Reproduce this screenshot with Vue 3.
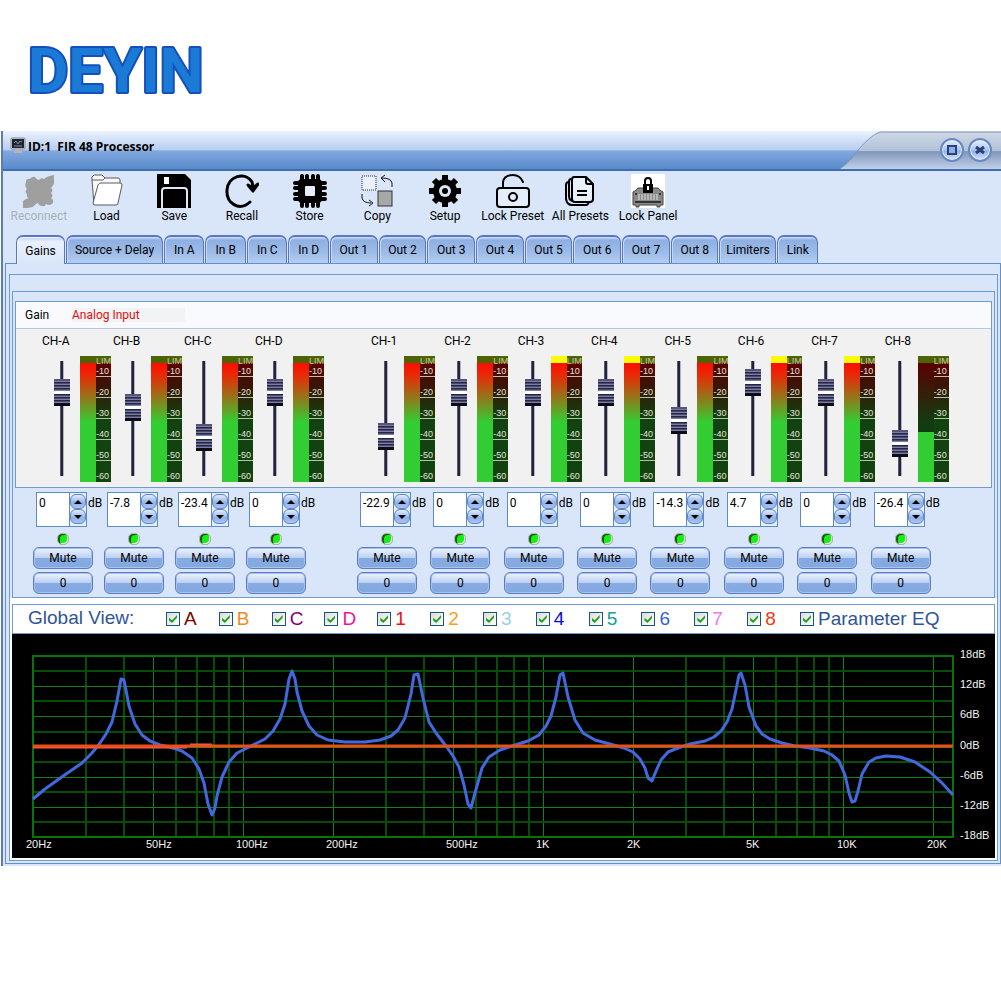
<script setup>
import { ref } from 'vue'

const tools = [
  { id: 'reconnect', label: 'Reconnect', disabled: true },
  { id: 'load', label: 'Load' },
  { id: 'save', label: 'Save' },
  { id: 'recall', label: 'Recall' },
  { id: 'store', label: 'Store' },
  { id: 'copy', label: 'Copy' },
  { id: 'setup', label: 'Setup' },
  { id: 'lockPreset', label: 'Lock Preset' },
  { id: 'allPresets', label: 'All Presets' },
  { id: 'lockPanel', label: 'Lock Panel' }
]

const tabs = [
  { label: 'Gains', size: 470 },
  { label: 'Source + Delay', size: 950 },
  ...['A', 'B', 'C', 'D'].map((n) => ({ label: 'In ' + n, size: 385 })),
  ...[1, 2, 3, 4, 5, 6, 7, 8].map((n) => ({ label: 'Out ' + n, size: 457 })),
  { label: 'Limiters', size: 550 },
  { label: 'Link', size: 385 }
]
const activeTab = ref('Gains')

const channels = ref([
  { id: 'A', gain: 0, input: true },
  { id: 'B', gain: -7.8, input: true },
  { id: 'C', gain: -23.4, input: true },
  { id: 'D', gain: 0, input: true },
  { id: '1', gain: -22.9 },
  { id: '2', gain: 0 },
  { id: '3', gain: 0, limit: true },
  { id: '4', gain: 0, limit: true },
  { id: '5', gain: -14.3 },
  { id: '6', gain: 4.7, limit: true },
  { id: '7', gain: 0, limit: true },
  { id: '8', gain: -26.4, level: 42 }
])
function nudge(ch, step) {
  ch.gain = Math.round((ch.gain + step) * 10) / 10
}

const scale = [-10, -20, -30, -40, -50, -60]

const views = ref([
  { id: 'A', color: '#800000' },
  { id: 'B', color: '#f08c1e' },
  { id: 'C', color: '#800080' },
  { id: 'D', color: '#ee1493' },
  { id: '1', color: '#ee1010' },
  { id: '2', color: '#f5a21c' },
  { id: '3', color: '#9ccfe0' },
  { id: '4', color: '#0808d8' },
  { id: '5', color: '#12a098' },
  { id: '6', color: '#3a5fd0' },
  { id: '7', color: '#e87ae8' },
  { id: '8', color: '#f03c10' }
].map((v) => ({ ...v, on: true })))
const parameterEq = ref(true)

const xOf = (f) => 243 + 300 * Math.log10(f / 100)
const freqs = [30, 40, 50, 60, 70, 80, 90]
for (const d of [100, 1000]) for (let n = 1; n < 10; n++) freqs.push(n * d)
freqs.push(10000, 20000)
const vLines = freqs.map((f) => ({ x: Math.round(xOf(f)), major: /^[125]/.test(String(f)) }))
const hLines = Array.from({ length: 11 }, (_, i) => ({ y: Math.round(656 + (i + 1) * 15.1), major: i % 2 === 1 }))
const xLabels = [
  [26, '20Hz'], [146, '50Hz'], [236, '100Hz'], [326, '200Hz'], [446, '500Hz'],
  [536, '1K'], [627, '2K'], [746, '5K'], [837, '10K'], [927, '20K']
]
const yLabels = ['18dB', '12dB', '6dB', '0dB', '-6dB', '-12dB', '-18dB']

const curve = '33,799 45,789 66,774 82,763 92,753 100,743 106,734 112,722 117,701 121,679 124,680 129,706 135,724 142,735 150,741 160,745 170,747 182,751 192,758 199,769 204,783 208,804 212,815 215,808 217,796 222,777 229,762 237,753 247,748 257,743 265,739 273,731 280,719 285,704 289,679 292,671 295,679 297,692 302,711 309,726 317,735 328,740 345,742 365,742 380,740 391,736 398,730 405,718 411,694 414,675 418,674 423,698 429,722 436,733 446,746 453,756 459,767 464,785 468,804 471,808 475,793 482,768 489,757 500,750 515,745 528,741 539,735 546,726 551,716 556,697 560,675 563,673 568,697 575,720 583,733 595,740 610,744 624,748 633,752 640,759 645,768 648,778 652,781 656,771 661,760 668,752 678,748 690,744 705,741 714,737 721,731 727,722 732,709 736,690 739,675 741,673 745,685 749,707 756,726 762,734 770,739 782,743 795,746 810,748 824,751 832,755 839,761 845,775 849,793 852,802 855,801 858,791 862,774 869,762 876,758 886,756 900,757 915,762 930,772 942,783 953,795'
</script>

<template>
  <header class="brand">
    <svg class="logo" width="200" height="70" role="img" aria-label="DEYIN">
      <text x="-1" y="56">DEYIN</text>
    </svg>
  </header>

  <main class="window">
    <div class="titlebar">
      <svg class="app-icon" width="16" height="17" viewBox="0 0 16 17">
        <rect x="1" y="1" width="14" height="11" rx="1" fill="#d8d8d8" stroke="#8a8a8a" />
        <rect x="2" y="2" width="12" height="9" fill="#1c2733" />
        <path d="M4 6l2-2 2 3 2-3 2 1M4 9h8" stroke="#8195a8" fill="none" />
        <path d="M6 12h4v2h2v2H4v-2h2z" fill="#b4b4b4" />
      </svg>
      <h1>ID:1&nbsp; FIR 48 Processor</h1>
      <div class="caption">
        <svg class="caption-bg" viewBox="0 0 161 38" preserveAspectRatio="none">
          <defs>
            <linearGradient id="cap" x1="0" y1="0" x2="0" y2="1">
              <stop offset="0" stop-color="#cfd8e6" />
              <stop offset=".5" stop-color="#b2c2d9" />
              <stop offset=".53" stop-color="#8097bb" />
              <stop offset="1" stop-color="#c2d0e8" />
            </linearGradient>
          </defs>
          <path d="M0 38C14 30 26 6 41 1H161V38Z" fill="url(#cap)" />
          <path d="M0 37C13 29 25 6 40 1H161" fill="none" stroke="#7c93b5" />
        </svg>
        <button class="round" aria-label="Maximize">
          <svg width="12" height="12" viewBox="0 0 12 12"><rect x="2" y="2" width="8" height="8" fill="#8fb0e4" stroke="#2b4272" stroke-width="2" /></svg>
        </button>
        <button class="round" aria-label="Close">
          <svg width="12" height="12" viewBox="0 0 12 12"><path d="M2 3l8 6M10 3L2 9" stroke="#2b4272" stroke-width="3" /></svg>
        </button>
      </div>
    </div>

    <nav class="toolbar">
      <button v-for="t in tools" :key="t.id" class="tool" :disabled="t.disabled">
        <svg width="34" height="34" viewBox="0 0 34 34" fill="none">
          <path v-if="t.id === 'reconnect'" fill="#9f9f9f" d="M4 8q0-4 4-3 2-3 5-2 2 3 4 3 2-3 5-1 3-3 10-4v9l-3 4q3 2 0 5 3 3 0 5 4 3 1 6-3 2-6 0-1 3-4 2-3 0-4-3-3 1-4 3-2 2-11 2v-7q2-2 6-3-3-1-2-4-3-2 0-5-3-3-1-7z" />
          <g v-else-if="t.id === 'load'" fill="#fff" stroke="#5c5c5c">
            <path d="M4 31L2 6V3l2-2h8l3 3h13q2 0 2 2v5" fill="#f8f8f8" />
            <path d="M2 6h11l2-2" />
            <path d="M5 31q-2 0-2-2L8 11q1-2 3-2h19q2 0 2 2l-4 18q0 2-2 2z" />
          </g>
          <g v-else-if="t.id === 'save'">
            <path d="M0 0H28L34 6V34H0Z" fill="#000" />
            <rect x="7" y="3" width="5" height="7" fill="#fff" />
            <path d="M5 34V17q0-3 3-3H27q3 0 3 3V34" stroke="#dce8f8" stroke-width="2" />
          </g>
          <g v-else-if="t.id === 'recall'" stroke="#000">
            <path d="M25 28C14 38 1 29 2 16 3 2 20-3 27 8q1 3 1 7" stroke-width="3" stroke-linecap="round" />
            <path d="M23 11l5 6 5-7-5 4z" fill="#000" stroke-width="3" stroke-linejoin="round" />
          </g>
          <g v-else-if="t.id === 'store'">
            <path d="M9 2v30M14 2v30M20 2v30M25 2v30M2 9h30M2 14h30M2 20h30M2 25h30" stroke="#000" stroke-width="4" stroke-linecap="round" />
            <rect x="5" y="5" width="24" height="24" rx="4" fill="#000" />
            <rect x="12" y="12" width="10" height="10" rx="1" fill="#e4edfa" />
          </g>
          <g v-else-if="t.id === 'copy'">
            <rect x="2" y="2" width="14" height="14" fill="#eaf1fc" stroke="#222" stroke-dasharray="1 1" />
            <rect x="18" y="17" width="14" height="15" fill="#a8a8a8" stroke="#333" />
            <path d="M32 13V9Q31 4 22 4M25 1l-4 3 4 4M2 20v4q1 5 9 5M9 26l4 3-4 3" stroke="#111" />
          </g>
          <g v-else-if="t.id === 'setup'">
            <path d="M17 1v32M1 17h32M6 6l22 22M6 28L28 6" stroke="#000" stroke-width="6" />
            <circle cx="17" cy="17" r="12" fill="#000" />
            <circle cx="17" cy="17" r="6" fill="#dce8f8" />
            <circle cx="17" cy="17" r="3" fill="#000" />
          </g>
          <g v-else-if="t.id === 'lockPreset'" stroke="#000" stroke-width="2">
            <rect x="1" y="14" width="32" height="19" rx="3" fill="#e4edfa" />
            <path d="M7 14V8Q8 1 17 1q7 0 10 7" stroke-linecap="round" />
            <circle cx="17" cy="23" r="4" />
          </g>
          <g v-else-if="t.id === 'allPresets'" stroke="#000" stroke-width="2" stroke-linejoin="round">
            <path d="M6 8q-3 0-3 3v14q1 6 6 6h14q2 0 3-3" />
            <path d="M8 5q-2 0-2 3v14q0 5 5 5" />
            <path d="M11 3h12l7 7v15q0 3-3 3H12q-3 0-3-3V6q0-3 2-3z" fill="#e8f0fb" />
            <path d="M23 3v5q0 2 2 2h5M14 17h10M14 21h10" />
          </g>
          <g v-else>
            <rect width="34" height="34" fill="#fff" />
            <path d="M4 17l3-3h20l3 3 2 1v13h-3v2h-3v-2H8v2H5v-2H2V18z" fill="#8b8b8b" stroke="#444" />
            <path d="M8 20v6M11 20v6M14 20v6M17 20v6M20 20v6M23 20v6M26 20v6" stroke="#e4e4e4" />
            <path d="M4 28h26M4 20h2M28 20h2" stroke="#333" stroke-width="2" />
            <rect x="12" y="10" width="10" height="9" fill="#000" />
            <path d="M14 11V7q0-3 3-3t3 3v4" stroke="#000" stroke-width="2" />
            <path d="M17 12v4" stroke="#fff" stroke-width="2" />
          </g>
        </svg>
        <span>{{ t.label }}</span>
      </button>
    </nav>

    <div class="tabs" role="tablist">
      <button
        v-for="t in tabs"
        :key="t.label"
        class="tab"
        :class="{ active: t.label === activeTab }"
        :style="{ flexGrow: t.size }"
        role="tab"
        :aria-selected="t.label === activeTab"
        @click="activeTab = t.label"
      >{{ t.label }}</button>
    </div>

    <section class="page">
      <div class="frame">
        <div class="mixer">
          <div class="levels">
            <div class="levels-head">
              <span class="gain-label">Gain</span>
              <span class="source">Analog Input</span>
            </div>
            <div class="strips">
              <div v-for="ch in channels" :key="ch.id" class="strip" :class="{ 'first-out': ch.id === '1' }">
                <label :for="'fader' + ch.id" class="name" :class="{ input: ch.input }">CH-{{ ch.id }}</label>
                <div class="strip-body">
                  <input :id="'fader' + ch.id" v-model.number="ch.gain" class="fader" type="range" min="-36" max="9" step="0.1" />
                  <div class="meter">
                    <div class="bar" :class="{ limit: ch.limit }">
                      <div class="lim-led"></div>
                      <div class="fill-area">
                        <div class="fill" :class="{ low: ch.level }" :style="{ height: (ch.level || 100) + '%' }"></div>
                      </div>
                    </div>
                    <div class="scale">
                      <span class="lim">LIM</span>
                      <span v-for="s in scale" :key="s" class="mark">{{ s }}</span>
                    </div>
                  </div>
                </div>
              </div>
            </div>
          </div>

          <div class="controls">
            <div v-for="ch in channels" :key="ch.id" class="control" :class="{ 'first-out': ch.id === '1' }">
              <div class="gain-row">
                <div class="spin">
                  <input v-model.number="ch.gain" type="text" :aria-label="'Gain CH-' + ch.id" />
                  <div class="spin-buttons">
                    <button class="up" :aria-label="'Raise CH-' + ch.id" @click="nudge(ch, 0.1)"></button>
                    <button class="down" :aria-label="'Lower CH-' + ch.id" @click="nudge(ch, -0.1)"></button>
                  </div>
                </div>
                <span>dB</span>
              </div>
              <span class="led"></span>
              <button class="pill">Mute</button>
              <button class="pill zero">0</button>
            </div>
          </div>
        </div>

        <div class="lower">
          <div class="global">
            <h2>Global View:</h2>
            <div class="checks">
              <label v-for="v in views" :key="v.id" :style="{ color: v.color }">
                <input v-model="v.on" type="checkbox" />{{ v.id }}
              </label>
            </div>
            <label class="param"><input v-model="parameterEq" type="checkbox" />Parameter EQ</label>
          </div>

          <svg class="chart" viewBox="12 634 983 224">
            <rect x="12" y="634" width="983" height="224" fill="#000" />
            <line v-for="l in vLines" :key="'v' + l.x" :x1="l.x" :x2="l.x" y1="656" y2="836" :class="l.major ? 'major' : 'minor'" />
            <line v-for="l in hLines" :key="'h' + l.y" :y1="l.y" :y2="l.y" x1="33" x2="953" :class="l.major ? 'major' : 'minor'" />
            <rect x="33" y="656" width="920" height="181" fill="none" stroke="#087308" stroke-width="2" />
            <polyline :points="curve" fill="none" stroke="#4169dc" stroke-width="3" stroke-linejoin="round" />
            <path d="M33 747H187M190 745H212" stroke="#f4604c" stroke-width="3" />
            <path d="M33 746H953" stroke="#ee4c18" stroke-width="3" />
            <text v-for="l in xLabels" :key="l[1]" :x="l[0]" y="848">{{ l[1] }}</text>
            <text v-for="(l, i) in yLabels" :key="l" x="960" :y="658 + Math.round(i * 30.2)">{{ l }}</text>
          </svg>
        </div>
      </div>
    </section>
  </main>
</template>

<style>
body {
  background: #fff;
}
</style>

<style scoped>
* {
  box-sizing: border-box;
}
button {
  font: inherit;
  color: inherit;
  padding: 0;
  margin: 0;
}
.brand {
  height: 131px;
  padding: 36px 0 0 29px;
}
.logo {
  display: block;
  overflow: visible;
}
.logo text {
  font: 700 62px Roboto, sans-serif;
  fill: #1a7ad6;
  stroke: #1450bc;
  stroke-width: 4px;
  stroke-linejoin: round;
  paint-order: stroke;
}
.window {
  margin-left: 1px;
  border-left: 2px solid #5f78c4;
  background: #d9e6f9;
  padding-bottom: 2px;
  font: 12px/14px Roboto, "Liberation Sans", sans-serif;
  color: #000;
}
.titlebar {
  display: flex;
  height: 40px;
  padding-left: 7px;
  border-bottom: 2px solid #3f6db6;
  background: linear-gradient(#eaf2fe, #b8cdef 50%, #83a9df 52%, #588aca);
}
.app-icon {
  margin-top: 6px;
}
.titlebar h1 {
  flex: 1;
  margin: 8px 0 0 2px;
  font: 700 12px/16px "Open Sans", "Noto Sans", sans-serif;
  white-space: nowrap;
}
.caption {
  position: relative;
  display: flex;
  gap: 4px;
  width: 161px;
  padding: 7px 9px 0 0;
  justify-content: flex-end;
}
.caption-bg {
  position: absolute;
  inset: 0;
  width: 100%;
  height: 100%;
}
.round {
  position: relative;
  display: flex;
  align-items: center;
  justify-content: center;
  width: 24px;
  height: 24px;
  border: 2px solid #6689c2;
  border-radius: 50%;
  background: linear-gradient(#e6effd, #a9c4f0 50%, #8cb0ea 55%, #d4e4fc);
  box-shadow: inset 0 0 0 1px #e8f0fc;
}
.toolbar {
  display: grid;
  grid-template-columns: repeat(10, 1fr);
  width: 677px;
  max-width: 100%;
  height: 64px;
  padding-top: 3px;
  margin-left: 2px;
}
.tool {
  display: flex;
  flex-direction: column;
  align-items: center;
  gap: 1px;
  border: 0;
  background: none;
  white-space: nowrap;
}
.tool:disabled {
  color: #a9b0ba;
}
.tabs {
  display: flex;
  width: 803px;
  max-width: 100%;
  height: 28px;
  margin-left: 13px;
}
.tab {
  flex: 1 1 0;
  height: 28px;
  margin-right: 1px;
  border: 1px solid #5b76c6;
  border-top-width: 2px;
  border-bottom: 0;
  border-radius: 7px 7px 0 0;
  background: linear-gradient(#d3e1f7, #8eafe0 3px, #9dbce8 60%, #b5cdf1);
  box-shadow: inset 1px 1px 0 #c6d8f4;
  white-space: nowrap;
}
.tab.active {
  position: relative;
  height: 29px;
  background: linear-gradient(#bcd0f0, #eaf1fc 5px, #d9e6f9);
  box-shadow: inset 1px 1px 0 #f0f5fe;
}
.page {
  margin-left: 2px;
  padding: 10px 2px 2px 3px;
  border: 1px solid #6290cc;
}
.frame {
  padding: 16px 2px 0;
  border: 1px solid #6f9bd0;
}
.mixer {
  padding: 9px 2px 0;
  border: 1px solid #6f9bd0;
}
.levels {
  border: 1px solid #6f9bd0;
  background: #f1f1f1;
}
.levels-head {
  display: flex;
  align-items: center;
  height: 27px;
  padding-left: 9px;
  border-bottom: 1px solid #b5c9e4;
  background: #f8fafe;
}
.gain-label {
  width: 47px;
}
.source {
  width: 113px;
  background: #f2f3f4;
  color: #e01010;
}
.strips,
.controls {
  display: grid;
  grid-template-columns: repeat(4, 710fr) 400fr repeat(8, 734fr) 470fr;
}
.strips {
  padding: 5px 0 5px 17px;
}
.first-out {
  grid-column-start: 6;
}
.strip,
.control {
  min-width: 0;
}
.name {
  display: block;
  margin: 0 0 8px 14px;
}
.name.input {
  margin-left: 9px;
}
.strip-body {
  display: flex;
  gap: 9px;
  margin-left: 20px;
}
.fader {
  appearance: none;
  writing-mode: vertical-lr;
  direction: rtl;
  width: 18px;
  height: 115px;
  margin: 5px 0 0;
  background: linear-gradient(90deg, transparent 7px, #8c8ca4 7px, #23233a 8px, #23233a 10px, #b4b4c4 10px, #b4b4c4 11px, transparent 11px);
}
.fader::-webkit-slider-runnable-track {
  width: 18px;
  height: 115px;
}
.fader::-webkit-slider-thumb {
  appearance: none;
  width: 16px;
  height: 27px;
  margin-left: 1px;
  background:
    linear-gradient(#55557a, #55557a) top / 16px 2px no-repeat,
    linear-gradient(#fff, #fff) 0 12px / 16px 3px no-repeat,
    linear-gradient(#0c0c14, #0c0c14) bottom / 16px 3px no-repeat,
    repeating-linear-gradient(#26263f 0 1px, #4a4a70 1px 2px, #7c7ca8 2px 3px);
}
.meter {
  display: flex;
  width: 31px;
  height: 126px;
}
.bar {
  display: flex;
  flex-direction: column;
  width: 16px;
}
.lim-led {
  height: 7px;
  background: #4c6406;
}
.limit .lim-led {
  background: #fafa00;
}
.fill-area {
  display: flex;
  flex: 1;
  flex-direction: column;
  justify-content: flex-end;
  background: linear-gradient(#5c0000, #113c11 50%);
}
.fill {
  background: linear-gradient(#ff0c00, #e23008 12%, #32cd32 50%);
}
.fill.low {
  background: #32cd32;
}
.scale {
  display: flex;
  flex-direction: column;
  width: 15px;
  background: linear-gradient(#4c6406 7px, #5c0000 7px, #321a06 35px, #11420f 62px);
  color: #e2e2da;
  font: 9px/9px "Liberation Sans", sans-serif;
}
.lim {
  height: 7px;
  line-height: 10px;
  color: #c4c49c;
}
.mark {
  height: 21px;
  padding-top: 11px;
  border-bottom: 1px solid #b8c0b0;
}
.lim + .mark {
  height: 14px;
  padding-top: 4px;
}
.mark:last-child {
  border-bottom: 0;
}
.controls {
  padding: 4px 1px 3px 18px;
}
.control {
  display: flex;
  flex-direction: column;
}
.gain-row {
  display: flex;
  gap: 1px;
  margin-left: 3px;
  line-height: 22px;
}
.spin {
  display: flex;
  width: 51px;
  height: 35px;
  border: 1px solid #5b8cc8;
  background: #fff;
}
.spin input {
  width: 33px;
  height: 33px;
  padding: 2px 0 15px 2px;
  border: 0;
  border-right: 1px solid #5b8cc8;
  background: #fff;
  font: inherit;
  line-height: 14px;
  outline: 0;
}
.spin-buttons {
  display: flex;
  flex-direction: column;
  width: 16px;
  padding-top: 1px;
  background: #e4eefc;
}
.spin-buttons button {
  display: flex;
  align-items: center;
  justify-content: center;
  width: 16px;
  height: 15px;
  border: 1px solid #5f85c8;
  border-radius: 6px;
  background: linear-gradient(#e4eefc, #8fb2ea 60%, #a9c6f4);
}
.spin-buttons button::before {
  content: "";
  border: 4px solid transparent;
  border-top-width: 0;
  border-bottom: 4px solid #000;
}
.spin-buttons .down::before {
  border-top: 4px solid #000;
  border-bottom-width: 0;
}
.led {
  width: 12px;
  height: 12px;
  margin: 6px 0 2px 24px;
  border: 1px solid #a8b89c;
  border-radius: 5px;
  background: #14f014;
  box-shadow: inset 2px 1px 0 #22521e, inset -1px -1px 0 #f0fff0;
}
.pill {
  width: 60px;
  height: 22px;
  border: 1px solid #5d7cc6;
  border-radius: 6px;
  background: linear-gradient(#eef4fe, #bcd1f2 48%, #87abe2 52%, #82a9e0);
  box-shadow: inset 0 0 0 1px #a9c2ec;
}
.pill.zero {
  margin-top: 3px;
}
.lower {
  margin: 0 -2px;
  padding: 6px 2px 2px;
  background: #fff;
}
.global {
  display: flex;
  align-items: center;
  height: 30px;
  border: 1px solid #6f9bd0;
  color: #2f5597;
  font: 19px/22px "Liberation Sans", Arial, sans-serif;
}
.global h2 {
  flex: 138 1 0;
  margin: 0;
  padding: 0 0 2px 15px;
  font: inherit;
  white-space: nowrap;
}
.checks {
  display: grid;
  flex: 634 1 0;
  grid-template-columns: repeat(12, 1fr);
}
.global label {
  display: flex;
  align-items: center;
  gap: 4px;
  white-space: nowrap;
}
.param {
  flex: 194 1 0;
}
.global input {
  appearance: none;
  display: flex;
  align-items: center;
  justify-content: center;
  width: 14px;
  height: 14px;
  margin: 0;
  border: 1px solid #1c5180;
  background: linear-gradient(135deg, #dcdcd7, #fff);
}
.global input:checked::before {
  content: "";
  width: 8px;
  height: 8px;
  background: #21a121;
  clip-path: polygon(0 35%, 38% 65%, 100% 0, 100% 35%, 38% 100%, 0 70%);
}
.chart {
  display: block;
  width: 100%;
}
.chart line {
  shape-rendering: crispEdges;
}
.chart .major {
  stroke: #128216;
}
.chart .minor {
  stroke: #064e08;
  stroke-width: 2px;
}
.chart text {
  fill: #f4f4f4;
  font: 11px "Liberation Sans", Arial, sans-serif;
}
</style>
